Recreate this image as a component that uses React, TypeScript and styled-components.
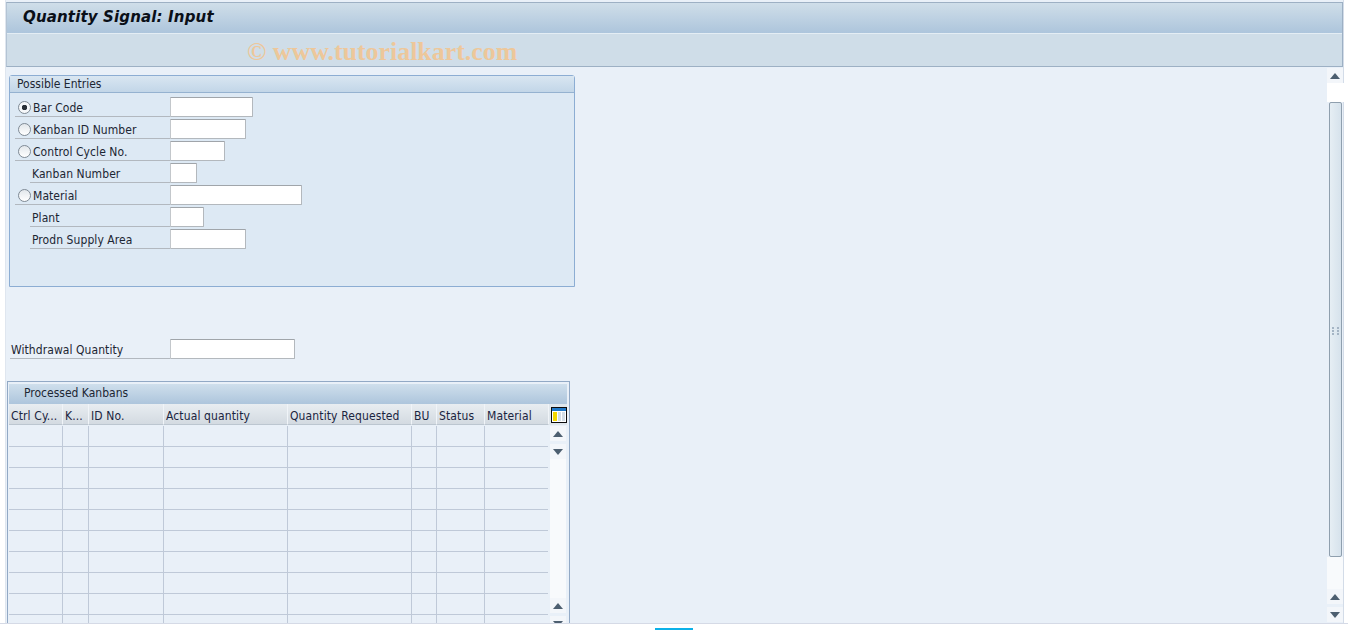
import React from "react";
import styled, { createGlobalStyle } from "styled-components";

const Global = createGlobalStyle`
  html, body { margin: 0; padding: 0; background: #fff; overflow: hidden; }
  * { box-sizing: border-box; }
  body { font-family: "DejaVu Sans Condensed", "Noto Sans", sans-serif; font-size: 12px; color: #1c2430; }
`;

const Page = styled.div`
  width: 1348px;
  height: 630px;
  display: flex;
  flex-direction: column;
  background: #fff;
  overflow: hidden;
`;
const Window = styled.div`
  height: 623px;
  margin-left: 5px;
  margin-right: 4px;
  display: flex;
  flex-direction: column;
  background: #e9f0f8;
  border-right: 1px solid #d3dce8;
  border-left: 1px solid #dfe6ef;
`;
const Header = styled.header`
  margin-top: 2px;
  height: 65px;
  flex: none;
  border: 1px solid #9db0c4;
  border-left-color: #b4c4d4;
  display: flex;
  flex-direction: column;
`;
const TitleBar = styled.div`
  height: 31px;
  flex: none;
  background: linear-gradient(#cfdee9, #adc5dc);
  border-bottom: 1px solid #e4edf4;
  padding-left: 16px;
  display: flex;
  align-items: center;
`;
const Title = styled.h1`
  margin: 0 0 2px;
  font: italic bold 15px "DejaVu Sans", Verdana, sans-serif;
  letter-spacing: 0.15px;
  color: #0a0f18;
`;
const SubBar = styled.div`
  flex: 1;
  min-height: 0;
  background: #cfdde8;
  padding-left: 240px;
  display: flex;
  align-items: center;
`;
const Watermark = styled.span`
  font: bold 25.9px/28px "Liberation Serif", serif;
  color: #edc79a;
  margin-top: 4px;
`;
const Body = styled.div`
  flex: 1;
  min-height: 0;
  display: flex;
`;
const Main = styled.main`
  flex: 1;
  min-width: 0;
  display: flex;
  flex-direction: column;
  align-items: flex-start;
  padding: 8px 0 0 3px;
  overflow: hidden;
`;
const GroupBox = styled.section`
  width: 566px;
  height: 212px;
  flex: none;
  background: #dde9f4;
  border: 1px solid #8cadd3;
  border-radius: 3px 3px 0 0;
`;
const GroupTitle = styled.div`
  height: 17px;
  padding-left: 7px;
  line-height: 16px;
  background: linear-gradient(#d9e6f1, #c2d6e8);
  border-bottom: 1px solid #95b2d0;
  color: #1c2633;
`;
const Form = styled.div`
  padding: 4px 0 0 5px;
  display: flex;
  flex-direction: column;
  gap: 2px;
`;
const Row = styled.div`
  height: 20px;
  display: flex;
  align-items: stretch;
`;
const Label = styled.label<{ $inset?: boolean; $w?: number; $pad?: number }>`
  width: ${(p) => p.$w ?? 155}px;
  margin-left: ${(p) => (p.$inset ? 15 : 0)}px;
  padding: 3px 0 0 ${(p) => p.$pad ?? (p.$inset ? 2 : 3)}px;
  display: flex;
  align-items: center;
  gap: 2px;
  border-bottom: 1px solid #b2b8bf;
  line-height: 16px;
  letter-spacing: 0.07px;
  white-space: nowrap;
  color: #1c2633;
`;
const Radio = styled.span<{ $on?: boolean }>`
  width: 13px;
  height: 13px;
  flex: none;
  margin-top: -1px;
  border-radius: 50%;
  border: 1px solid #7f8a94;
  background: ${(p) =>
    p.$on
      ? "radial-gradient(circle, #2a3138 0 2.5px, #f6f8fa 3px)"
      : "linear-gradient(#e2e7eb, #ffffff)"};
`;
const Input = styled.div<{ $w: number }>`
  width: ${(p) => p.$w}px;
  height: 20px;
  background: #fff;
  border: 1px solid #b3b8bd;
  border-top-color: #a0a5aa;
  border-left-color: #c3c7cb;
  border-radius: 1px;
`;
const QtyRow = styled(Row)`
  margin-top: 52px;
  margin-left: 1px;
  flex: none;
`;
const TableFrame = styled.section`
  margin-top: 22px;
  margin-left: -2px;
  width: 563px;
  flex: none;
  height: 243px;
  border: 1px solid #92a9c5;
  border-bottom: none;
  padding: 2px 2px 0 1px;
  overflow: hidden;
  display: flex;
  flex-direction: column;
`;
const TableTitle = styled.div`
  height: 20px;
  flex: none;
  padding-left: 15px;
  line-height: 19px;
  background: linear-gradient(#cfdfec, #adc5dc);
  color: #1c2633;
`;
const HeadRow = styled.div`
  height: 22px;
  flex: none;
  display: grid;
  grid-template-columns: 54px 26px 75px 124px 124px 25px 48px 64px 18px;
  background: #e9f0f8;
`;
const HeadCell = styled.div`
  height: 21px;
  padding: 3px 0 0 2px;
  line-height: 18px;
  letter-spacing: 0.12px;
  background: linear-gradient(#e8edf1, #d3dae1);
  border-right: 1px solid #f0f4f8;
  border-bottom: 1px solid #bcc6d0;
  white-space: nowrap;
  overflow: hidden;
  color: #1a2440;
`;
const ConfigCell = styled.div`
  display: flex;
  align-items: center;
  height: 21px;
  padding-left: 2px;
  background: #dfe6ec;
`;
const TableBody = styled.div`
  flex: 1;
  min-height: 0;
  display: flex;
  align-items: stretch;
`;
const Rows = styled.div`
  width: 539px;
  flex: none;
`;
const DataRow = styled.div`
  height: 21px;
  display: grid;
  grid-template-columns: 54px 26px 75px 124px 124px 25px 48px 63px;
  border-bottom: 1px solid #bfc9d8;
`;
const DataCell = styled.div`
  border-right: 1px solid #bfc9d8;
  &:last-child { border-right: none; }
`;
const ScrollCol = styled.div<{ $main?: boolean }>`
  width: 16px;
  margin-left: ${(p) => (p.$main ? 0 : 2)}px;
  flex: none;
  display: flex;
  flex-direction: column;
  margin-top: ${(p) => (p.$main ? 1 : 0)}px;
`;
const ScrollBtn = styled.div<{ $gap?: number }>`
  height: 15px;
  flex: none;
  margin-bottom: ${(p) => p.$gap ?? 0}px;
  background: #f3f6fa;
  display: flex;
  align-items: center;
  justify-content: center;
`;
const Track = styled.div`
  height: 139px;
  flex: none;
  background: #f8fafc;
`;
const MainTrack = styled.div`
  height: 19px;
  background: #fff;
  margin-right: -1px;
  flex: none;
`;
const MainTrackEnd = styled.div`
  flex: 1;
  background: #f8fafc;
`;
const Thumb = styled.div`
  height: 455px;
  flex: none;
  margin: 0 1px 0 2px;
  padding-top: 3px;
  border: 1px solid #8f9fae;
  border-radius: 2px;
  background: linear-gradient(90deg, #e6eef4, #d6e2ec);
  display: flex;
  align-items: center;
  justify-content: center;
`;
const Footer = styled.footer`
  flex: 1;
  border-top: 1px solid #d5dae6;
  padding: 4px 0 0 655px;
`;
const Progress = styled.div`
  width: 38px;
  height: 2px;
  background: #0cb1e8;
`;

const Up = () => (
  <svg width="10" height="6" viewBox="0 0 10 6"><path d="M5 0 L10 6 H0 Z" fill="#4d5f70" /></svg>
);
const Down = () => (
  <svg width="10" height="6" viewBox="0 0 10 6"><path d="M0 0 H10 L5 6 Z" fill="#4d5f70" /></svg>
);
const Grip = () => (
  <svg width="7" height="8" viewBox="0 0 7 8" fill="#a4b4c4">
    {[0, 3, 6].map((y) => (
      <React.Fragment key={y}>
        <rect x="0" y={y} width="2" height="2" />
        <rect x="5" y={y} width="2" height="2" />
      </React.Fragment>
    ))}
  </svg>
);
const ConfigIcon = () => (
  <svg width="16" height="16" viewBox="0 0 16 16">
    <rect x="0" y="0" width="16" height="16" fill="#0c0c0c" />
    <rect x="1" y="1" width="14" height="14" fill="#ffffff" />
    <rect x="1" y="1" width="14" height="3" fill="#1f78c8" />
    <rect x="2" y="5" width="4" height="9" fill="#f4d800" />
    <rect x="7" y="5" width="3" height="9" fill="#d3dde6" />
    <rect x="11" y="5" width="3" height="9" fill="#d3dde6" />
  </svg>
);

const fields = [
  { label: "Bar Code", w: 83, radio: true, on: true },
  { label: "Kanban ID Number", w: 76, radio: true },
  { label: "Control Cycle No.", w: 55, radio: true },
  { label: "Kanban Number", w: 27 },
  { label: "Material", w: 132, radio: true },
  { label: "Plant", w: 34 },
  { label: "Prodn Supply Area", w: 76 },
];
const heads = ["Ctrl Cy...", "K...", "ID No.", "Actual quantity", "Quantity Requested", "BU", "Status", "Material"];

export default function App() {
  return (
    <Page>
      <Global />
      <Window>
        <Header>
          <TitleBar>
            <Title>Quantity Signal: Input</Title>
          </TitleBar>
          <SubBar>
            <Watermark>© www.tutorialkart.com</Watermark>
          </SubBar>
        </Header>
        <Body>
          <Main>
            <GroupBox>
              <GroupTitle>Possible Entries</GroupTitle>
              <Form>
                {fields.map((f) => (
                  <Row key={f.label}>
                    <Label $inset={!f.radio} $w={f.radio ? 155 : 140}>
                      {f.radio && <Radio $on={f.on} />}
                      {f.label}
                    </Label>
                    <Input $w={f.w} />
                  </Row>
                ))}
              </Form>
            </GroupBox>
            <QtyRow>
              <Label $w={160} $pad={1}>Withdrawal Quantity</Label>
              <Input $w={125} />
            </QtyRow>
            <TableFrame>
              <TableTitle>Processed Kanbans</TableTitle>
              <HeadRow>
                {heads.map((h) => (
                  <HeadCell key={h}>{h}</HeadCell>
                ))}
                <ConfigCell>
                  <ConfigIcon />
                </ConfigCell>
              </HeadRow>
              <TableBody>
                <Rows>
                  {Array.from({ length: 10 }).map((_, i) => (
                    <DataRow key={i}>
                      {heads.map((h) => (
                        <DataCell key={h} />
                      ))}
                    </DataRow>
                  ))}
                </Rows>
                <ScrollCol>
                  <ScrollBtn $gap={3}><Up /></ScrollBtn>
                  <ScrollBtn><Down /></ScrollBtn>
                  <Track />
                  <ScrollBtn $gap={3}><Up /></ScrollBtn>
                  <ScrollBtn><Down /></ScrollBtn>
                </ScrollCol>
              </TableBody>
            </TableFrame>
          </Main>
          <ScrollCol $main>
            <ScrollBtn><Up /></ScrollBtn>
            <MainTrack />
            <Thumb><Grip /></Thumb>
            <MainTrackEnd />
            <ScrollBtn $gap={3}><Up /></ScrollBtn>
            <ScrollBtn $gap={1}><Down /></ScrollBtn>
          </ScrollCol>
        </Body>
      </Window>
      <Footer>
        <Progress />
      </Footer>
    </Page>
  );
}
